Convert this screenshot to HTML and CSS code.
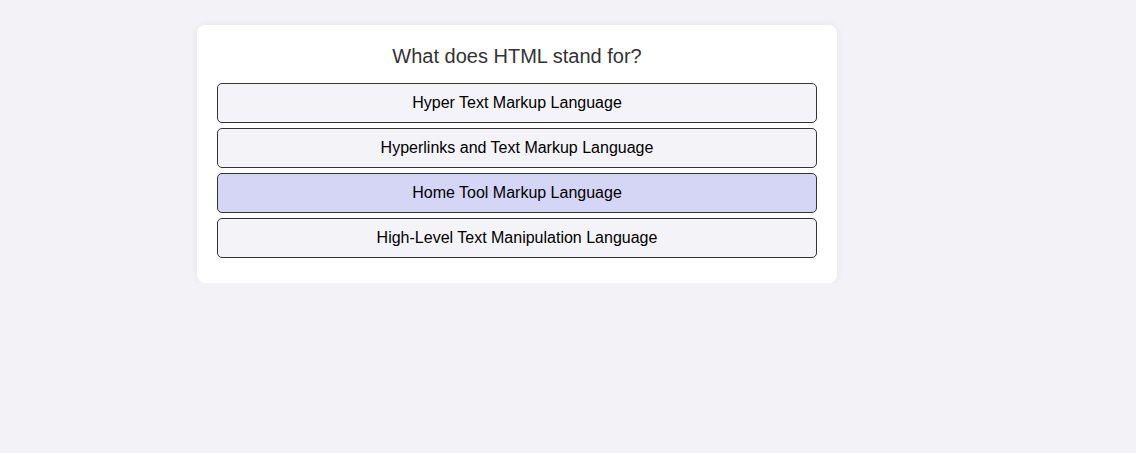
FILE: index.html
```html
<!DOCTYPE html>
<html>
<head>
<meta charset="utf-8">
<link rel="stylesheet" href="styles.css">
</head>
<body>
<div class="page">
  <div class="card">
    <h2 class="question">What does HTML stand for?</h2>
    <div class="options">
      <button class="option">Hyper Text Markup Language</button>
      <button class="option">Hyperlinks and Text Markup Language</button>
      <button class="option option-hover">Home Tool Markup Language</button>
      <button class="option">High-Level Text Manipulation Language</button>
    </div>
  </div>
</div>
</body>
</html>
```
FILE: styles.css
```css
html, body {
  margin: 0;
  padding: 0;
  background: #f3f3f7;
  font-family: "Liberation Sans", Arial, sans-serif;
}
.page {
  padding: 25px 0 0 197px;
}
.card {
  width: 600px;
  background: #ffffff;
  border-radius: 8px;
  padding: 20px 20px 25px;
  box-shadow: 0 0 8px rgba(0, 0, 0, 0.06);
}
.question {
  margin: 0 0 15px;
  font-size: 20px;
  font-weight: normal;
  line-height: 23px;
  color: #333333;
  text-align: center;
}
.options {
  display: flex;
  flex-direction: column;
  gap: 5px;
}
.option {
  display: block;
  width: 100%;
  height: 40px;
  margin: 0;
  padding: 0 10px;
  background: #f3f3f8;
  border: 1px solid #333333;
  border-radius: 5px;
  font-family: "Liberation Sans", Arial, sans-serif;
  font-size: 16px;
  color: #000000;
  text-align: center;
}
.option-hover {
  background: #d5d5f5;
}
```
